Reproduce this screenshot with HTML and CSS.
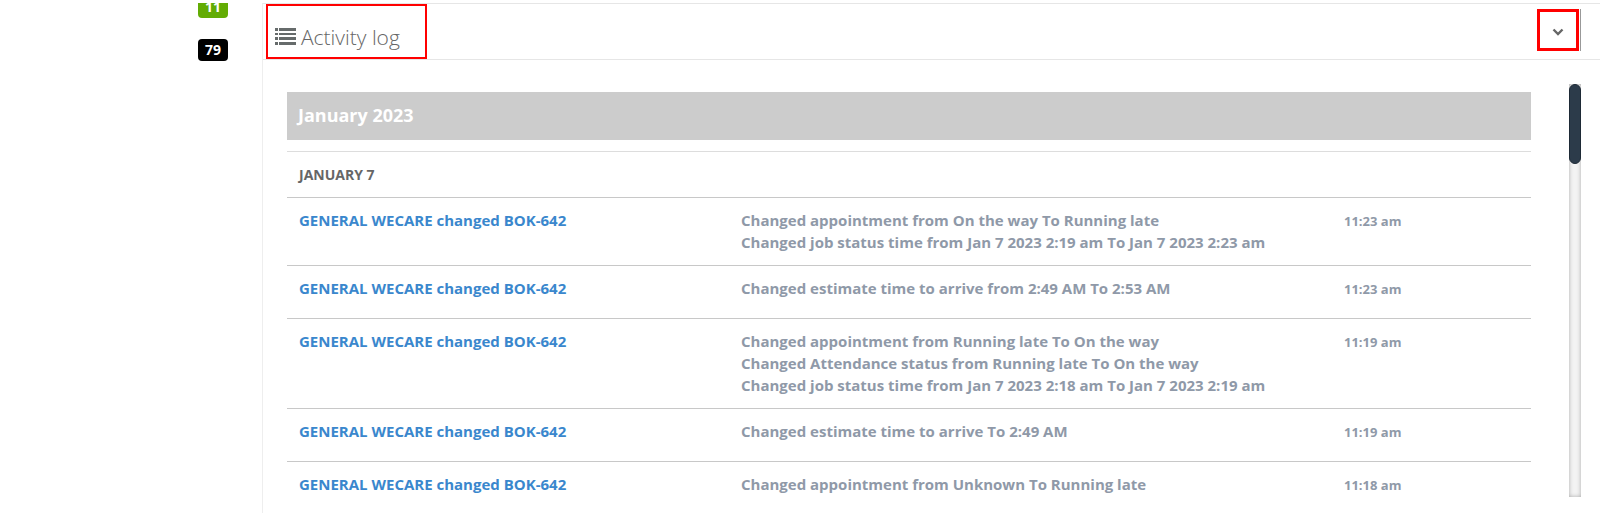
FILE: index.html
```
<!DOCTYPE html>
<html lang="en">
<head>
    <meta charset="UTF-8">
    <meta name="viewport" content="width=device-width, initial-scale=1.0">
    <title>Activity log</title>
    <link rel="stylesheet" href="styles.css">
</head>
<body>

    <!-- Counters -->
    <aside class="counters">
        <span class="badge green">11</span>
        <span class="badge black">79</span>
    </aside>

    <!-- Activity panel -->
    <main class="panel">
        <header class="panel-header">
            <h2 class="title">
                <svg class="list-icon" viewBox="0 0 21 17" width="21" height="17" aria-hidden="true">
                    <path d="M0 0h3v3H0zM4 0h17v3H4zM0 5h3v2H0zM4 5h17v2H4zM0 9h3v3H0zM4 9h17v3H4zM0 14h3v3H0zM4 14h17v3H4z" fill="#666b6b"/>
                </svg>
                Activity log
            </h2>
            <div class="toggle-frame">
                <button class="toggle" type="button" aria-label="Collapse">
                    <svg viewBox="0 0 12 8" width="12" height="8" aria-hidden="true">
                        <path d="M1.5 1.5L6 6l4.500-4.500" fill="none" stroke="#666" stroke-width="2.400"/>
                    </svg>
                </button>
            </div>
        </header>

        <div class="panel-body">
            <section class="log">
                <h3 class="month">January 2023</h3>
                <h4 class="day">JANUARY 7</h4>
                <table class="entries">
                    <tr>
                        <td class="who"><a href="#">GENERAL WECARE changed BOK-642</a></td>
                        <td class="what">Changed appointment from On the way To Running late<br>Changed job status time from Jan 7 2023 2:19 am To Jan 7 2023 2:23 am</td>
                        <td class="when">11:23 am</td>
                    </tr>
                    <tr>
                        <td class="who"><a href="#">GENERAL WECARE changed BOK-642</a></td>
                        <td class="what">Changed estimate time to arrive from 2:49 AM To 2:53 AM</td>
                        <td class="when">11:23 am</td>
                    </tr>
                    <tr>
                        <td class="who"><a href="#">GENERAL WECARE changed BOK-642</a></td>
                        <td class="what">Changed appointment from Running late To On the way<br>Changed Attendance status from Running late To On the way<br>Changed job status time from Jan 7 2023 2:18 am To Jan 7 2023 2:19 am</td>
                        <td class="when">11:19 am</td>
                    </tr>
                    <tr>
                        <td class="who"><a href="#">GENERAL WECARE changed BOK-642</a></td>
                        <td class="what">Changed estimate time to arrive To 2:49 AM</td>
                        <td class="when">11:19 am</td>
                    </tr>
                    <tr>
                        <td class="who"><a href="#">GENERAL WECARE changed BOK-642</a></td>
                        <td class="what">Changed appointment from Unknown To Running late</td>
                        <td class="when">11:18 am</td>
                    </tr>
                </table>
            </section>
            <div class="scrollbar"><div class="thumb"></div></div>
        </div>
    </main>

</body>
</html>
```

FILE: styles.css
```
* {
    box-sizing: border-box;
}
body {
    display: flex;
    margin: 0;
    padding-top: 3px;
    min-height: 100vh;
    background-color: #fff;
    font-family: "Open Sans", sans-serif;
    color: #666;
}
h2, h3, h4 {
    margin: 0;
}

/* counters */
.counters {
    display: flex;
    flex-direction: column;
    align-items: flex-end;
    gap: 21px;
    width: 262px;
    padding-right: 34px;
    overflow: hidden;
}
.badge {
    width: 30px;
    height: 22px;
    border-radius: 4px;
    color: #fff;
    font-size: 14px;
    font-weight: 700;
    line-height: 22px;
    text-align: center;
}
.green {
    margin-top: -7px;
    background-color: #62ac04;
}
.black {
    background-color: #000;
}

/* panel */
.panel {
    flex: 1;
    border-left: 1px solid #eee;
    border-top: 1px solid #e6e6e6;
}
.panel-header {
    display: flex;
    justify-content: space-between;
    align-items: flex-start;
    padding: 0 19px 0 3px;
    border-bottom: 1px solid #e6e6e6;
}
.title {
    display: flex;
    align-items: center;
    gap: 5px;
    width: 161px;
    height: 55px;
    padding: 10px 0 0 7px;
    border: 2px solid #f00;
    font-size: 21px;
    font-weight: 300;
    line-height: 30px;
}
.toggle-frame {
    margin-top: 5px;
    padding-right: 1px;
    border-right: 1px solid #999;
}
.toggle {
    display: flex;
    align-items: center;
    justify-content: center;
    width: 42px;
    height: 42px;
    padding: 4px 0 0;
    border: 3px solid #f00;
    background-color: #fff;
    cursor: pointer;
}

/* log */
.panel-body {
    display: flex;
    gap: 38px;
    padding: 24px 19px 18px 24px;
}
.log {
    flex: 1;
    padding-top: 8px;
}
.month {
    height: 48px;
    margin-bottom: 11px;
    padding-left: 11px;
    background-color: #ccc;
    color: #fff;
    font-size: 18px;
    font-weight: 700;
    line-height: 46px;
}
.day {
    padding-left: 12px;
    border-top: 1px solid #ddd;
    font-size: 14px;
    font-weight: 700;
    line-height: 45px;
}
.entries {
    width: 100%;
    border-collapse: collapse;
    table-layout: fixed;
}
.entries td {
    padding: 11px 0 12px 12px;
    border-top: 1px solid #c8c8c8;
    color: #8f99a8;
    font-size: 15px;
    font-weight: 700;
    line-height: 22px;
    vertical-align: top;
}
.entries .who {
    width: 442px;
    padding-bottom: 19px;
}
.entries .who a {
    color: #3a87cd;
    text-decoration: none;
}
.entries .when {
    width: 16%;
    padding-top: 12px;
    font-size: 13px;
}
.entries tr:last-child td {
    padding-bottom: 1px;
}
.scrollbar {
    width: 12px;
    background-color: #f3f3f3;
    box-shadow: inset 0 0 4px rgba(0, 0, 0, 0.3);
}
.thumb {
    height: 80px;
    border: 1px solid #1e2a36;
    border-radius: 6px;
    background-color: #2c3b4a;
}
```
